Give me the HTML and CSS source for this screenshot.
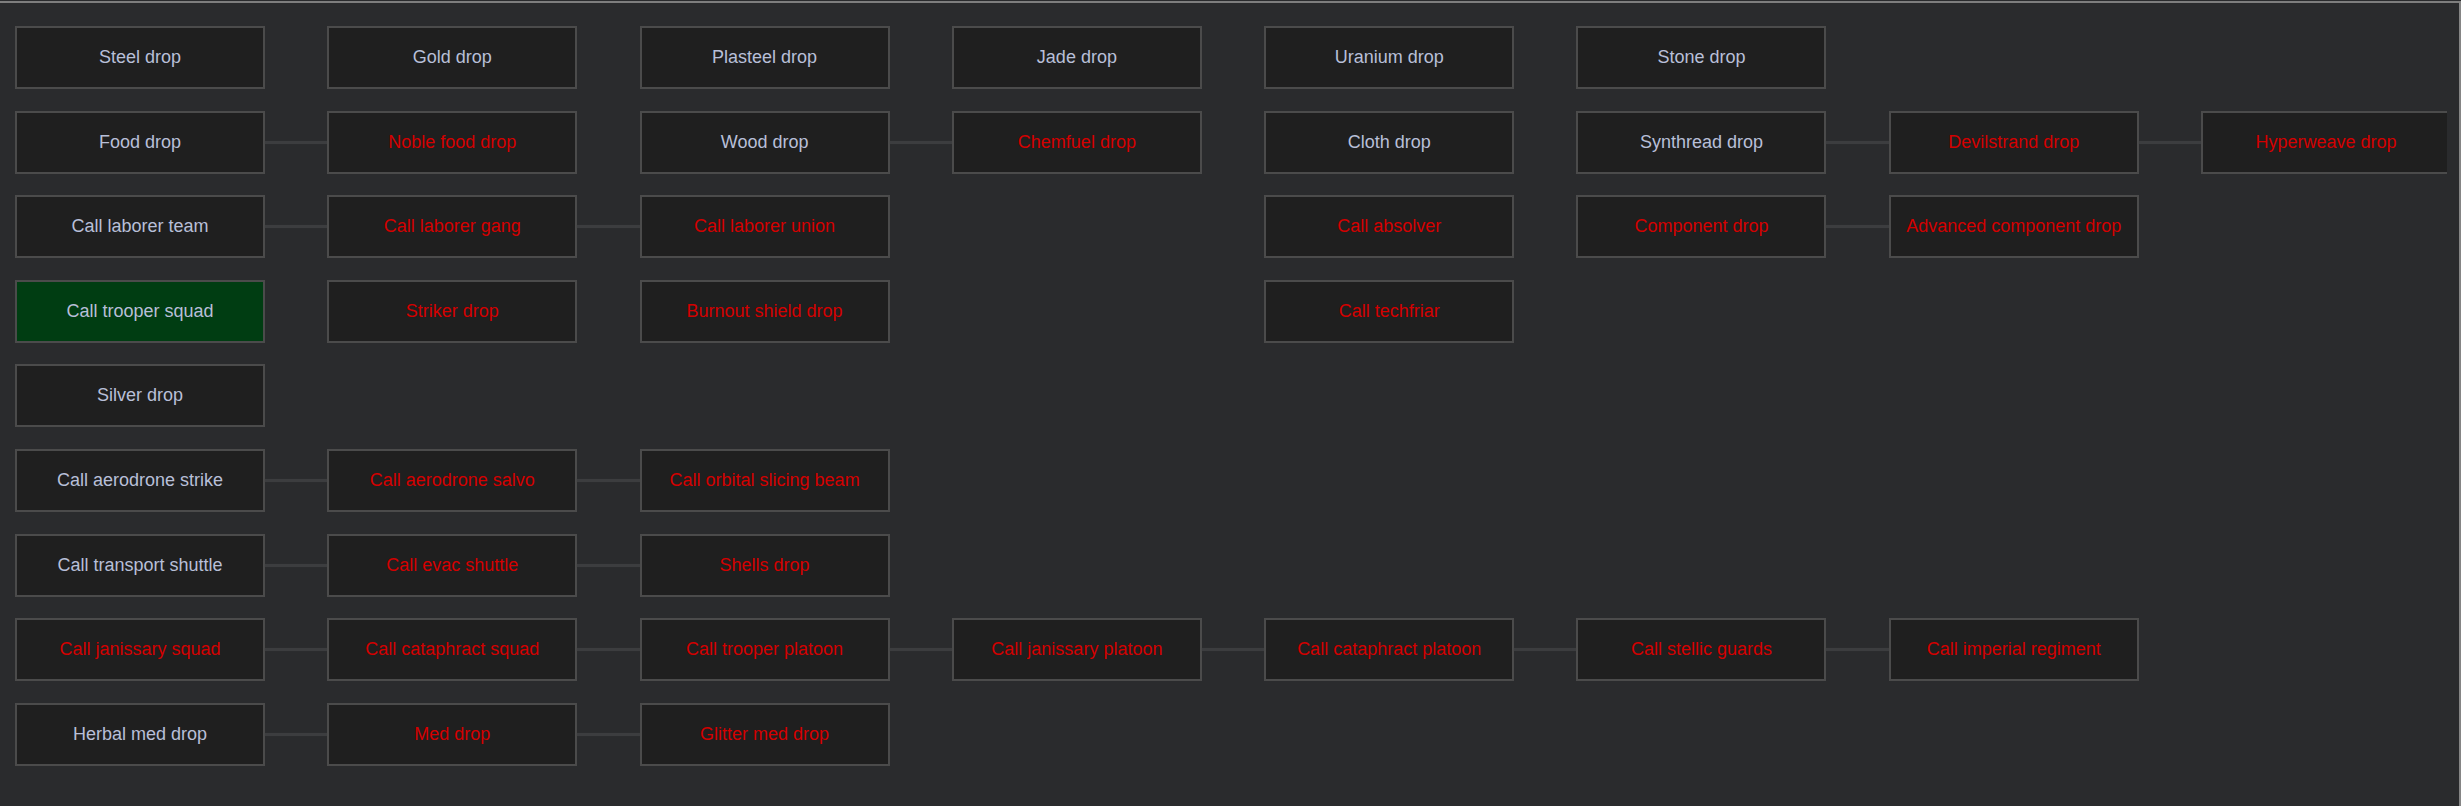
FILE: index.html
```html
<html>
    <head>
        <link rel="stylesheet" href="styles.css">
    </head>

    <body>
        <div class="frame">
            <div class="tree">

                <div class="tier">
                    <div class="node">Steel drop</div>
                    <div class="gap"></div>
                    <div class="node">Gold drop</div>
                    <div class="gap"></div>
                    <div class="node">Plasteel drop</div>
                    <div class="gap"></div>
                    <div class="node">Jade drop</div>
                    <div class="gap"></div>
                    <div class="node">Uranium drop</div>
                    <div class="gap"></div>
                    <div class="node">Stone drop</div>
                </div>

                <div class="tier">
                    <div class="node">Food drop</div>
                    <div class="link"></div>
                    <div class="node locked">Noble food drop</div>
                    <div class="gap"></div>
                    <div class="node">Wood drop</div>
                    <div class="link"></div>
                    <div class="node locked">Chemfuel drop</div>
                    <div class="gap"></div>
                    <div class="node">Cloth drop</div>
                    <div class="gap"></div>
                    <div class="node">Synthread drop</div>
                    <div class="link"></div>
                    <div class="node locked">Devilstrand drop</div>
                    <div class="link"></div>
                    <div class="node locked">Hyperweave drop</div>
                </div>

                <div class="tier">
                    <div class="node">Call laborer team</div>
                    <div class="link"></div>
                    <div class="node locked">Call laborer gang</div>
                    <div class="link"></div>
                    <div class="node locked">Call laborer union</div>
                    <div class="gap"></div>
                    <div class="blank"></div>
                    <div class="gap"></div>
                    <div class="node locked">Call absolver</div>
                    <div class="gap"></div>
                    <div class="node locked">Component drop</div>
                    <div class="link"></div>
                    <div class="node locked">Advanced component drop</div>
                </div>

                <div class="tier">
                    <div class="node active">Call trooper squad</div>
                    <div class="gap"></div>
                    <div class="node locked">Striker drop</div>
                    <div class="gap"></div>
                    <div class="node locked">Burnout shield drop</div>
                    <div class="gap"></div>
                    <div class="blank"></div>
                    <div class="gap"></div>
                    <div class="node locked">Call techfriar</div>
                </div>

                <div class="tier">
                    <div class="node">Silver drop</div>
                </div>

                <div class="tier">
                    <div class="node">Call aerodrone strike</div>
                    <div class="link"></div>
                    <div class="node locked">Call aerodrone salvo</div>
                    <div class="link"></div>
                    <div class="node locked">Call orbital slicing beam</div>
                </div>

                <div class="tier">
                    <div class="node">Call transport shuttle</div>
                    <div class="link"></div>
                    <div class="node locked">Call evac shuttle</div>
                    <div class="link"></div>
                    <div class="node locked">Shells drop</div>
                </div>

                <div class="tier">
                    <div class="node locked">Call janissary squad</div>
                    <div class="link"></div>
                    <div class="node locked">Call cataphract squad</div>
                    <div class="link"></div>
                    <div class="node locked">Call trooper platoon</div>
                    <div class="link"></div>
                    <div class="node locked">Call janissary platoon</div>
                    <div class="link"></div>
                    <div class="node locked">Call cataphract platoon</div>
                    <div class="link"></div>
                    <div class="node locked">Call stellic guards</div>
                    <div class="link"></div>
                    <div class="node locked">Call imperial regiment</div>
                </div>

                <div class="tier">
                    <div class="node">Herbal med drop</div>
                    <div class="link"></div>
                    <div class="node locked">Med drop</div>
                    <div class="link"></div>
                    <div class="node locked">Glitter med drop</div>
                </div>

            </div>
        </div>
    </body>
</html>
```

FILE: styles.css
```css
html, body {
    margin: 0;
    height: 100%;
    background-color: #2a2b2d;
}

body {
    padding-top: 1px;
    box-sizing: border-box;
}

.frame {
    height: 100%;
    box-sizing: border-box;
    border-top: 2px solid #7e7e7e;
    border-right: 2px solid #858585;
}

.tree {
    margin-right: 12px;
    padding: 23px 0 0 15px;
    overflow: hidden;
    display: flex;
    flex-direction: column;
    gap: 21.6px;
}

.tier {
    display: flex;
    align-items: center;
}

.node {
    flex: 0 0 250px;
    height: 63px;
    box-sizing: border-box;
    border: 2px solid #4b4b4b;
    background-color: #1f1f1f;
    color: #b8bfd8;
    font-family: "Liberation Sans", Arial, sans-serif;
    font-size: 18px;
    display: flex;
    align-items: center;
    justify-content: center;
    white-space: nowrap;
}

.node.locked {
    color: #d40000;
}

.node.active {
    background-color: #003d12;
}

.blank {
    flex: 0 0 250px;
}

.gap {
    flex: 0 0 62.3px;
}

.link {
    flex: 0 0 62.3px;
    height: 3px;
    background-color: #3c3d3f;
    box-shadow: 0 0 1px #3c3d3f;
}
```
